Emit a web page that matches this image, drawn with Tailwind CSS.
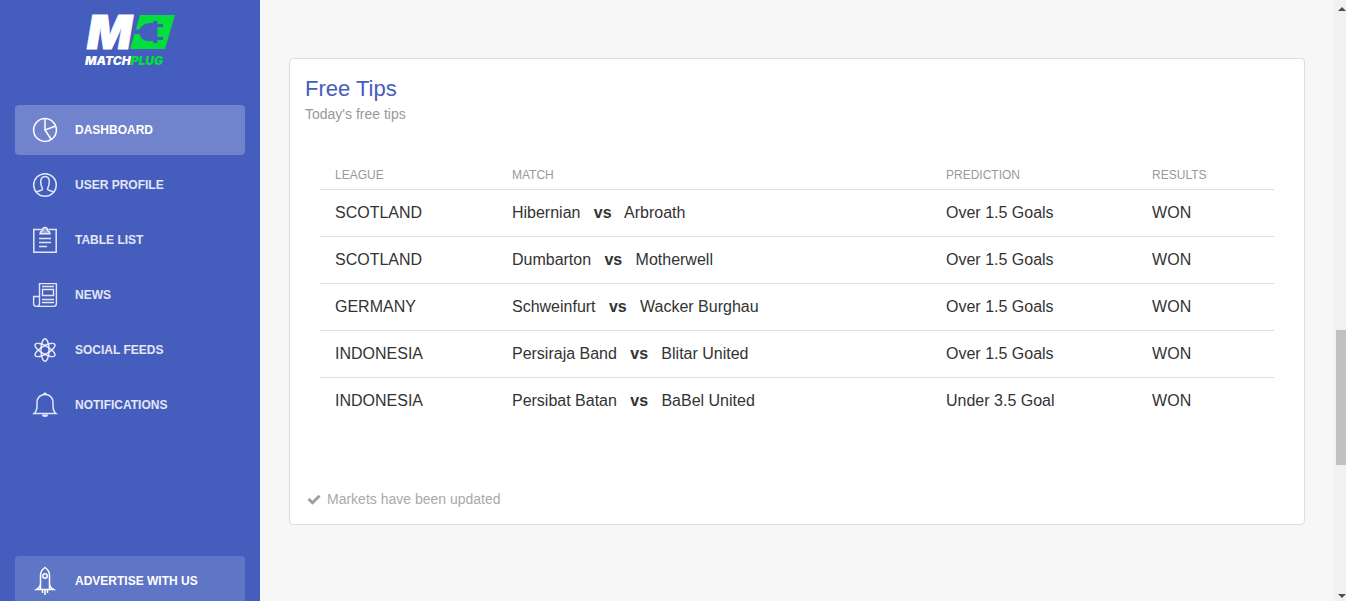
<!DOCTYPE html>
<html lang="en">
<head>
<meta charset="utf-8">
<meta name="viewport" content="width=device-width, initial-scale=1">
<title>MatchPlug</title>
<script src="https://cdn.jsdelivr.net/npm/@tailwindcss/browser@4"></script>
</head>
<body class="flex h-screen overflow-hidden bg-[#f7f7f7] font-['Liberation_Sans',Arial,sans-serif] text-[#333333]">
<aside class="flex w-[260px] shrink-0 flex-col bg-[#455ebd] px-[15px] text-xs font-bold text-white">
  <a href="#" aria-label="MatchPlug" class="flex h-[105px] shrink-0 justify-center">
    <svg class="h-[75px] w-[100px] overflow-visible" viewBox="0 -10 100 75">
      <text x="7" y="39" fill="#fff" stroke="#fff" stroke-width="1" font-family="Inter, sans-serif" font-size="47" font-weight="900" font-style="italic">M</text>
      <path fill="#00df3c" d="M60 5H95L85 39H50Z"/>
      <path fill="#455ebd" d="M55 19.500H59.500Q63 13 70 13H73V11H77.500V14H83V17H77.500V27H83V30H77.500V33H73V31H68Q61 31 59.500 24H53Z"/>
      <text x="5" y="55" fill="#fff" font-family="Inter, sans-serif" font-size="12" font-weight="900" font-style="italic">MATCH<tspan fill="#00df3c">PLUG</tspan></text>
    </svg>
  </a>
  <nav class="flex flex-col gap-[5px]">
    <a href="#" aria-current="page" class="flex h-[50px] items-center gap-[15px] rounded bg-white/23 pl-[15px]">
      <svg class="size-[30px]" viewBox="0 0 30 30" fill="none" stroke="currentColor" stroke-width="1.500"><circle cx="15" cy="15" r="11.400"/><path d="M15 3.600V15L25.700 11M15 15L21.300 24.500"/></svg>
      <span>DASHBOARD</span>
    </a>
    <a href="#" class="flex h-[50px] items-center gap-[15px] rounded pl-[15px] text-white/85">
      <svg class="size-[30px]" viewBox="0 0 30 30" fill="none" stroke="currentColor" stroke-width="1.500"><circle cx="15" cy="15" r="11.300"/><path d="M6.500 22.200C8.500 20.500 12.500 21 12.500 19C12.500 17.700 10.700 16.500 10.700 12C10.700 8.400 12.200 6.600 15 6.600S19.300 8.400 19.300 12C19.300 16.500 17.500 17.700 17.500 19C17.500 21 21.500 20.500 23.500 22.200"/></svg>
      <span>USER PROFILE</span>
    </a>
    <a href="#" class="flex h-[50px] items-center gap-[15px] rounded pl-[15px] text-white/85">
      <svg class="size-[30px]" viewBox="0 0 30 30" fill="none" stroke="currentColor" stroke-width="1.500"><path d="M11.500 4.500H3.800V27.300H26.200V4.500H18.500M9 13.500H21M9 17.500H21M9 21.500H17"/><path fill="currentColor" fill-opacity=".5" d="M10 8.700Q10 6.700 12.300 5.500Q12.500 2.600 15 2.600T17.700 5.500Q20 6.700 20 8.700Z"/></svg>
      <span>TABLE LIST</span>
    </a>
    <a href="#" class="flex h-[50px] items-center gap-[15px] rounded pl-[15px] text-white/85">
      <svg class="size-[30px]" viewBox="0 0 30 30" fill="none" stroke="currentColor" stroke-width="1.400"><path d="M9.500 16.500H3.600V23.500Q3.600 26.400 6.500 26.400H23.500Q26.400 26.400 26.400 23.500V3.600H9.500V23.500Q9.500 26.400 6.500 26.400M12 6.500H24M12.500 9.500H23.500V15.500H12.500ZM12 19.500H24M12 22.500H24"/></svg>
      <span>NEWS</span>
    </a>
    <a href="#" class="flex h-[50px] items-center gap-[15px] rounded pl-[15px] text-white/85">
      <svg class="size-[30px]" viewBox="0 0 30 30" fill="none" stroke="currentColor" stroke-width="1.400"><ellipse cx="15" cy="15" rx="4" ry="11.300"/><ellipse cx="15" cy="15" rx="4" ry="11.300" transform="rotate(60 15 15)"/><ellipse cx="15" cy="15" rx="4" ry="11.300" transform="rotate(120 15 15)"/></svg>
      <span>SOCIAL FEEDS</span>
    </a>
    <a href="#" class="flex h-[50px] items-center gap-[15px] rounded pl-[15px] text-white/85">
      <svg class="size-[30px]" viewBox="0 0 30 30" fill="none" stroke="currentColor" stroke-width="1.500"><path d="M4 23.500C6.500 21.500 7 19.500 7 16V12.500C7 7.500 10.500 4.500 15 4.500S23 7.500 23 12.500V16C23 19.500 23.500 21.500 26 23.500Z"/><path fill="currentColor" stroke="none" d="M13 4.500A2 2 0 0 1 17 4.500ZM12 24.500H18A3 2.500 0 0 1 12 24.500Z"/></svg>
      <span>NOTIFICATIONS</span>
    </a>
  </nav>
  <a href="#" class="mt-auto -mb-[5px] flex h-[50px] shrink-0 items-center gap-[15px] rounded bg-white/14 pl-[15px]">
    <svg class="size-[30px]" viewBox="0 0 30 30" fill="none" stroke="currentColor" stroke-width="1.500"><path d="M10.500 23.500V9.500Q10.500 4.500 15 1.500Q19.500 4.500 19.500 9.500V23.500M10.500 17.500Q10.500 21 6.500 23.500H23.500Q19.500 21 19.500 17.500M12.500 24V27M15 24V29M17.500 24V27"/><circle cx="15" cy="10" r="2.200"/></svg>
    <span>ADVERTISE WITH US</span>
  </a>
</aside>

<main class="min-w-0 flex-1 px-[29px] pt-[58px]">
  <section class="rounded border border-[#dddddd] bg-white p-[15px]">
    <h1 class="text-[22px] leading-[30px] text-[#455ebd]">Free Tips</h1>
    <p class="text-sm text-[#999999]">Today's free tips</p>
    <div class="px-[15px] pt-[35px]">
      <table class="w-full table-fixed border-separate border-spacing-0 text-left">
        <thead class="text-xs text-[#999999]">
          <tr class="h-[30px] *:px-[15px] *:pt-0.5 *:font-normal">
            <th scope="col" class="w-[18.55%]">LEAGUE</th><th scope="col" class="w-[45.5%]">MATCH</th><th scope="col" class="w-[21.6%]">PREDICTION</th><th scope="col">RESULTS</th>
          </tr>
        </thead>
        <tbody>
          <tr class="h-[47px] *:border-t *:border-[#dddddd] *:px-[15px]"><td>SCOTLAND</td><td>Hibernian &nbsp; <b>vs</b> &nbsp; Arbroath</td><td>Over 1.5 Goals</td><td>WON</td></tr>
          <tr class="h-[47px] *:border-t *:border-[#dddddd] *:px-[15px]"><td>SCOTLAND</td><td>Dumbarton &nbsp; <b>vs</b> &nbsp; Motherwell</td><td>Over 1.5 Goals</td><td>WON</td></tr>
          <tr class="h-[47px] *:border-t *:border-[#dddddd] *:px-[15px]"><td>GERMANY</td><td>Schweinfurt &nbsp; <b>vs</b> &nbsp; Wacker Burghau</td><td>Over 1.5 Goals</td><td>WON</td></tr>
          <tr class="h-[47px] *:border-t *:border-[#dddddd] *:px-[15px]"><td>INDONESIA</td><td>Persiraja Band &nbsp; <b>vs</b> &nbsp; Blitar United</td><td>Over 1.5 Goals</td><td>WON</td></tr>
          <tr class="h-[47px] *:border-t *:border-[#dddddd] *:px-[15px]"><td>INDONESIA</td><td>Persibat Batan &nbsp; <b>vs</b> &nbsp; BaBel United</td><td>Under 3.5 Goal</td><td>WON</td></tr>
        </tbody>
      </table>
    </div>
    <footer class="mt-[65px] flex items-center gap-1.5 pl-0.5 text-sm text-[#a9a9a9]">
      <svg class="size-3.5" viewBox="0 0 14 14" fill="none" stroke="#a0a0a0" stroke-width="3"><path d="M1.500 7L5.500 10.700L12.500 3.700"/></svg>
      <span>Markets have been updated</span>
    </footer>
  </section>
</main>

<div aria-hidden="true" class="flex w-3 shrink-0 flex-col items-end bg-[#f1f1f1]">
  <svg class="h-[17px] w-2.5" viewBox="0 0 10 17" fill="#505050"><path d="M2 11L6 7L10 11Z"/></svg>
  <div class="flex flex-1 flex-col items-end">
    <div class="flex-[313]"></div>
    <div class="w-2.5 flex-[135] bg-[#c1c1c1]"></div>
    <div class="flex-[119]"></div>
  </div>
  <svg class="h-[17px] w-2.5" viewBox="0 0 10 17" fill="#505050"><path d="M2 10H10L6 14Z"/></svg>
</div>
</body>
</html>
